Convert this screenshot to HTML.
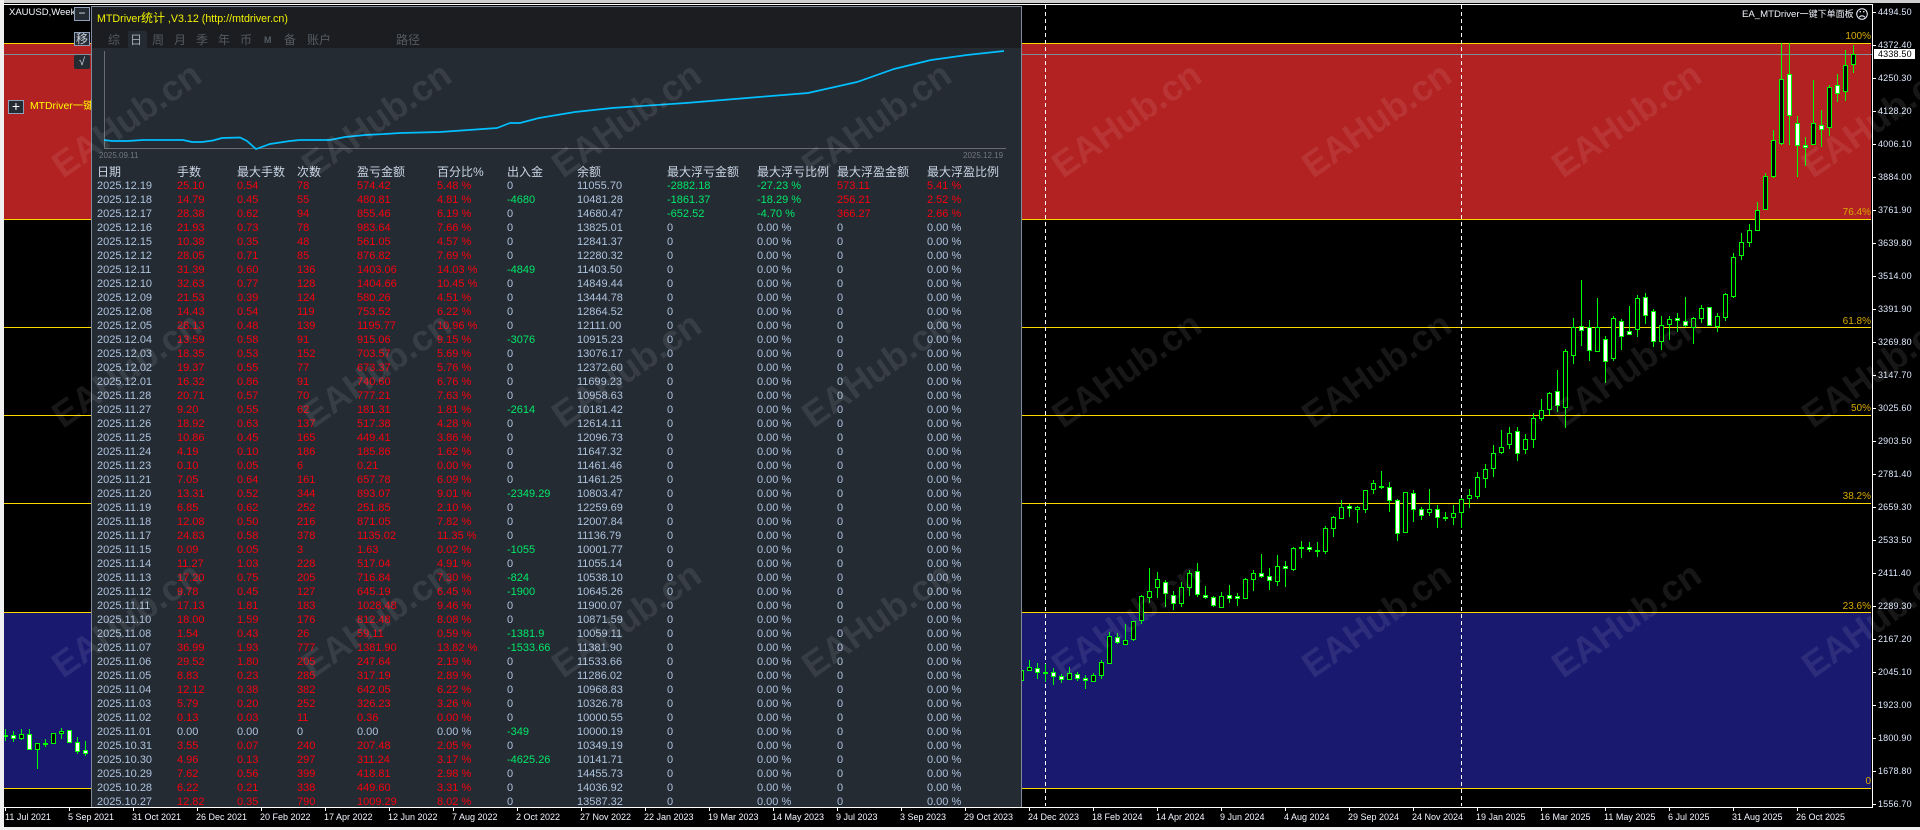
<!DOCTYPE html>
<html><head><meta charset="utf-8"><title>MTDriver</title>
<style>
html,body{margin:0;padding:0;background:#000;width:1920px;height:830px;overflow:hidden}
body{position:relative;font-family:"Liberation Sans","Noto Sans CJK SC",sans-serif;color:#fff}
.a{position:absolute}
.pr{position:absolute;left:1878px;font-size:9px;line-height:12px;color:#dfeaff;letter-spacing:.02em}
.dt{position:absolute;top:811px;font-size:9px;line-height:12px;color:#f2f6ff;white-space:nowrap}
.fb{position:absolute;right:49px;font-size:10px;line-height:12px;color:#d9ab00}
#panel{position:absolute;left:91px;top:6px;width:929px;height:801px;background:#252b33;border:1px solid #7f8a9a;border-bottom:0;overflow:hidden}
#head{position:absolute;left:0;top:0;width:100%;height:41px;background:#1b1d20}
.tab{position:absolute;top:25px;font-size:12px;line-height:16px;color:#555b62}
#tbl{position:absolute;left:5px;top:158px;width:920px;height:643px;overflow:hidden;font-size:11px;color:#aec3de}
#tbl p{margin:0;display:grid;grid-template-columns:80px 60px 60px 60px 80px 70px 70px 90px 90px 80px 90px 80px;height:14px;line-height:14px;white-space:nowrap}
#tbl p.h{font-size:12px;color:#c8d4e4}
#tbl b{font-weight:normal;color:#f60010}
#tbl i{font-style:normal;color:#00e868}
.btn{position:absolute;box-sizing:border-box;background:#252b33;border:1px solid #8fa1ba;color:#dfe6f0;font-size:12px;line-height:12px;text-align:center;overflow:hidden}
</style></head><body>

<div class="a" style="left:4px;top:43px;width:1867px;height:176px;background:#b22222"></div>
<div class="a" style="left:4px;top:612px;width:1867px;height:176px;background:#191970"></div>

<svg class="a" style="left:0;top:0" width="1920" height="830" shape-rendering="crispEdges">
<path fill="none" stroke="#ffd700" stroke-width="1" d="M4 43.5H1871M4 219.5H1871M4 327.5H1871M4 415.5H1871M4 503.5H1871M4 612.5H1871M4 788.5H1871"/>
<path fill="none" stroke="#7f8d9b" stroke-width="1" d="M4 54.5H1872"/>
<path fill="none" stroke="#fff" stroke-width="1" stroke-dasharray="4 3" d="M1045.5 5V806M1461.5 5V806"/>
<path fill="none" stroke="#00ff00" stroke-width="1" d="M5.5 729V741M13.5 731V742M21.5 729V740M29.5 729V749M37.5 743V769M45.5 739V747M53.5 733V744M61.5 728V739M69.5 730V743M77.5 737V754M85.5 741V756M1021.5 668V682M1029.5 660V671M1037.5 663V679M1045.5 664V682M1053.5 668V685M1061.5 674V683M1069.5 667V680M1077.5 672V681M1085.5 675V689M1093.5 673V682M1101.5 660V679M1109.5 632V663M1117.5 633V644M1125.5 624V645M1133.5 621V641M1141.5 595V624M1149.5 568V603M1157.5 572V598M1165.5 580V607M1173.5 591V610M1181.5 582V607M1189.5 570V596M1197.5 563V597M1205.5 586V599M1213.5 596V607M1221.5 592V607M1229.5 585V603M1237.5 593V606M1245.5 578V598M1253.5 570V591M1261.5 554V578M1269.5 568V590M1277.5 555V586M1285.5 561V587M1293.5 547V571M1301.5 541V558M1309.5 542V552M1317.5 542V557M1325.5 526V554M1333.5 516V537M1341.5 500V519M1349.5 504V517M1357.5 506V523M1365.5 490V513M1373.5 480V494M1381.5 471V489M1389.5 482V512M1397.5 499V541M1405.5 492V532M1413.5 490V522M1421.5 507V520M1429.5 489V516M1437.5 505V528M1445.5 512V521M1453.5 505V525M1461.5 498V528M1469.5 489V508M1477.5 472V499M1485.5 464V488M1493.5 445V477M1501.5 430V454M1509.5 427V449M1517.5 427V461M1525.5 434V454M1533.5 413V448M1541.5 399V421M1549.5 392V415M1557.5 370V412M1565.5 349V428M1573.5 318V364M1581.5 280V346M1589.5 320V361M1597.5 298V352M1605.5 336V383M1613.5 316V361M1621.5 319V350M1629.5 306V334M1637.5 295V337M1645.5 293V324M1653.5 309V347M1661.5 316V350M1669.5 316V340M1677.5 313V332M1685.5 297V327M1693.5 317V344M1701.5 305V323M1709.5 307V326M1717.5 313V332M1725.5 293V321M1733.5 253V298M1741.5 233V260M1749.5 224V247M1757.5 202V231M1765.5 173V210M1773.5 130V178M1781.5 43V145M1789.5 43V145M1797.5 116V177M1805.5 137V166M1813.5 80V145M1821.5 110V147M1829.5 85V136M1837.5 74V102M1845.5 50V101M1853.5 45V73"/>
<path fill="#000" stroke="#00ff00" stroke-width="1" d="M3.5 735.5h4v1h-4zM19.5 734.5h4v4h-4zM35.5 743.5h4v6h-4zM51.5 733.5h4v10h-4zM59.5 731.5h4v2h-4zM1019.5 670.5h4v10h-4zM1027.5 667.5h4v3h-4zM1067.5 673.5h4v6h-4zM1091.5 675.5h4v6h-4zM1099.5 662.5h4v13h-4zM1107.5 636.5h4v27h-4zM1123.5 640.5h4v4h-4zM1131.5 621.5h4v18h-4zM1139.5 596.5h4v24h-4zM1147.5 591.5h4v6h-4zM1155.5 579.5h4v8h-4zM1179.5 587.5h4v16h-4zM1187.5 573.5h4v14h-4zM1219.5 596.5h4v11h-4zM1243.5 579.5h4v19h-4zM1251.5 573.5h4v6h-4zM1275.5 566.5h4v15h-4zM1291.5 548.5h4v21h-4zM1315.5 550.5h4v1h-4zM1323.5 528.5h4v23h-4zM1331.5 517.5h4v11h-4zM1339.5 507.5h4v11h-4zM1355.5 507.5h4v2h-4zM1363.5 490.5h4v19h-4zM1371.5 483.5h4v6h-4zM1403.5 492.5h4v40h-4zM1427.5 509.5h4v3h-4zM1443.5 517.5h4v1h-4zM1451.5 513.5h4v4h-4zM1459.5 499.5h4v13h-4zM1467.5 495.5h4v3h-4zM1475.5 477.5h4v19h-4zM1483.5 469.5h4v9h-4zM1491.5 453.5h4v15h-4zM1499.5 447.5h4v5h-4zM1507.5 433.5h4v11h-4zM1523.5 439.5h4v10h-4zM1531.5 418.5h4v21h-4zM1539.5 410.5h4v8h-4zM1547.5 393.5h4v16h-4zM1563.5 351.5h4v56h-4zM1571.5 327.5h4v28h-4zM1595.5 327.5h4v24h-4zM1611.5 318.5h4v40h-4zM1635.5 298.5h4v31h-4zM1659.5 325.5h4v16h-4zM1667.5 319.5h4v5h-4zM1691.5 318.5h4v9h-4zM1699.5 308.5h4v10h-4zM1715.5 316.5h4v10h-4zM1723.5 294.5h4v23h-4zM1731.5 257.5h4v39h-4zM1739.5 242.5h4v13h-4zM1747.5 230.5h4v12h-4zM1755.5 210.5h4v20h-4zM1763.5 176.5h4v33h-4zM1771.5 140.5h4v36h-4zM1779.5 79.5h4v64h-4zM1811.5 123.5h4v21h-4zM1827.5 87.5h4v40h-4zM1843.5 65.5h4v26h-4zM1851.5 54.5h4v10h-4z"/>
<path fill="#fff" stroke="#00ff00" stroke-width="1" d="M11.5 735.5h4v3h-4zM27.5 734.5h4v15h-4zM43.5 743.5h4v1h-4zM67.5 730.5h4v12h-4zM75.5 742.5h4v9h-4zM83.5 750.5h4v3h-4zM1035.5 668.5h4v4h-4zM1043.5 672.5h4v1h-4zM1051.5 672.5h4v4h-4zM1059.5 676.5h4v3h-4zM1075.5 674.5h4v4h-4zM1083.5 678.5h4v2h-4zM1115.5 637.5h4v5h-4zM1163.5 582.5h4v11h-4zM1171.5 595.5h4v8h-4zM1195.5 571.5h4v23h-4zM1203.5 595.5h4v2h-4zM1211.5 597.5h4v8h-4zM1227.5 595.5h4v3h-4zM1235.5 596.5h4v2h-4zM1259.5 573.5h4v3h-4zM1267.5 576.5h4v4h-4zM1283.5 566.5h4v2h-4zM1299.5 547.5h4v1h-4zM1307.5 547.5h4v2h-4zM1347.5 506.5h4v2h-4zM1379.5 486.5h4v1h-4zM1387.5 487.5h4v13h-4zM1395.5 500.5h4v33h-4zM1411.5 493.5h4v16h-4zM1419.5 509.5h4v6h-4zM1435.5 509.5h4v8h-4zM1515.5 431.5h4v22h-4zM1555.5 391.5h4v14h-4zM1579.5 326.5h4v4h-4zM1587.5 327.5h4v23h-4zM1603.5 339.5h4v22h-4zM1619.5 321.5h4v15h-4zM1627.5 331.5h4v3h-4zM1643.5 297.5h4v18h-4zM1651.5 311.5h4v30h-4zM1675.5 318.5h4v2h-4zM1683.5 321.5h4v4h-4zM1707.5 307.5h4v18h-4zM1787.5 74.5h4v41h-4zM1795.5 123.5h4v22h-4zM1803.5 145.5h4v2h-4zM1819.5 125.5h4v4h-4zM1835.5 85.5h4v8h-4z"/>
</svg>

<div class="a" style="left:9px;top:6px;width:65px;height:13px;overflow:hidden;font-size:9.5px;line-height:13px;white-space:nowrap;color:#f4f8ff">XAUUSD,Weekly</div>
<div class="btn" style="left:74px;top:7px;width:16px;height:14px;line-height:11px">−</div>
<div class="btn" style="left:74px;top:32px;width:16px;height:14px;line-height:12px;color:#c8d2de">移</div>
<div class="btn" style="left:74px;top:55px;width:16px;height:14px;border:0;font-size:11px;line-height:14px;border-radius:2px;color:#c8d4e4">√</div>
<div class="btn" style="left:8px;top:100px;width:16px;height:14px;line-height:11px;font-size:14px;color:#fff">+</div>
<div class="a" style="left:30px;top:100px;width:61px;height:14px;overflow:hidden;font-size:10.4px;line-height:14px;white-space:nowrap;color:#ff0">MTDriver一键下单面板</div>

<div class="a" style="left:1742px;top:7px;font-size:9.6px;line-height:14px;white-space:nowrap;color:#f2f6ff">EA_MTDriver<span style="font-size:9px">一键下单面板</span></div>
<svg class="a" style="left:1855px;top:7px" width="14" height="14" fill="none" stroke="#eef3ff" stroke-width="1"><circle cx="7" cy="7" r="5.3"/><path d="M4 10.2Q7 7.4 10 10.2"/><path d="M4.6 4.7h1.3M8.1 4.7h1.3" stroke-width="1.4"/></svg>

<div class="fb" style="top:31px">100%</div>
<div class="fb" style="top:207px">76.4%</div>
<div class="fb" style="top:316px">61.8%</div>
<div class="fb" style="top:403px">50%</div>
<div class="fb" style="top:491px">38.2%</div>
<div class="fb" style="top:601px">23.6%</div>
<div class="fb" style="top:776px">0</div>

<div id="panel">
<div id="head"></div>
<div class="a" style="left:5px;top:3px;font-size:10.7px;line-height:16px;white-space:nowrap;color:#f2f200">MTDriver<span style="font-size:12px">统计</span> ,V3.12 (http://mtdriver.cn)</div>
<div class="a" style="left:36px;top:24px;width:19px;height:17px;background:#252b33;border-radius:2px"></div>
<div class="tab" style="left:16px">综</div>
<div class="tab" style="left:38px;color:#a3abb5">日</div>
<div class="tab" style="left:60px">周</div>
<div class="tab" style="left:82px">月</div>
<div class="tab" style="left:104px">季</div>
<div class="tab" style="left:126px">年</div>
<div class="tab" style="left:148px">币</div>
<div class="tab" style="left:172px;font-size:9px;font-weight:bold">M</div>
<div class="tab" style="left:192px">备</div>
<div class="tab" style="left:215px">账户</div>
<div class="tab" style="left:304px">路径</div>
<svg class="a" style="left:-92px;top:-7px" width="1022" height="165">
<path fill="none" stroke="#666c72" stroke-width="1" shape-rendering="crispEdges" d="M104.5 51V148.5H1006"/>
<polyline fill="none" stroke="#00bfff" stroke-width="1.7" points="104,140 112,141 128,141 143,140 183,140 192,142 202,142 213,140.5 222,138 240,137.5 247,141 256,149 270,144 290,141 300,140 330,140 345,137 365,135 385,134 400,133 440,132 497,128 510,123 520,123 539,118 575,112 612,108 686,103 759,97 808,93 857,82 894,69 931,60 967,55 1004,51"/>
</svg>
<div class="a" style="left:7px;top:143px;font-size:8px;line-height:12px;color:#727880">2025.09.11</div>
<div class="a" style="left:871px;top:143px;font-size:8px;line-height:12px;color:#727880">2025.12.19</div>
<div id="tbl">
<p class="h"><span>日期</span><span>手数</span><span>最大手数</span><span>次数</span><span>盈亏金额</span><span>百分比%</span><span>出入金</span><span>余额</span><span>最大浮亏金额</span><span>最大浮亏比例</span><span>最大浮盈金额</span><span>最大浮盈比例</span></p>
<p><span>2025.12.19</span><b>25.10</b><b>0.54</b><b>78</b><b>574.42</b><b>5.48 %</b><span>0</span><span>11055.70</span><i>-2882.18</i><i>-27.23 %</i><b>573.11</b><b>5.41 %</b></p>
<p><span>2025.12.18</span><b>14.79</b><b>0.45</b><b>55</b><b>480.81</b><b>4.81 %</b><i>-4680</i><span>10481.28</span><i>-1861.37</i><i>-18.29 %</i><b>256.21</b><b>2.52 %</b></p>
<p><span>2025.12.17</span><b>28.38</b><b>0.62</b><b>94</b><b>855.46</b><b>6.19 %</b><span>0</span><span>14680.47</span><i>-652.52</i><i>-4.70 %</i><b>366.27</b><b>2.66 %</b></p>
<p><span>2025.12.16</span><b>21.93</b><b>0.73</b><b>78</b><b>983.64</b><b>7.66 %</b><span>0</span><span>13825.01</span><span>0</span><span>0.00 %</span><span>0</span><span>0.00 %</span></p>
<p><span>2025.12.15</span><b>10.38</b><b>0.35</b><b>48</b><b>561.05</b><b>4.57 %</b><span>0</span><span>12841.37</span><span>0</span><span>0.00 %</span><span>0</span><span>0.00 %</span></p>
<p><span>2025.12.12</span><b>28.05</b><b>0.71</b><b>85</b><b>876.82</b><b>7.69 %</b><span>0</span><span>12280.32</span><span>0</span><span>0.00 %</span><span>0</span><span>0.00 %</span></p>
<p><span>2025.12.11</span><b>31.39</b><b>0.60</b><b>136</b><b>1403.06</b><b>14.03 %</b><i>-4849</i><span>11403.50</span><span>0</span><span>0.00 %</span><span>0</span><span>0.00 %</span></p>
<p><span>2025.12.10</span><b>32.63</b><b>0.77</b><b>128</b><b>1404.66</b><b>10.45 %</b><span>0</span><span>14849.44</span><span>0</span><span>0.00 %</span><span>0</span><span>0.00 %</span></p>
<p><span>2025.12.09</span><b>21.53</b><b>0.39</b><b>124</b><b>580.26</b><b>4.51 %</b><span>0</span><span>13444.78</span><span>0</span><span>0.00 %</span><span>0</span><span>0.00 %</span></p>
<p><span>2025.12.08</span><b>14.43</b><b>0.54</b><b>119</b><b>753.52</b><b>6.22 %</b><span>0</span><span>12864.52</span><span>0</span><span>0.00 %</span><span>0</span><span>0.00 %</span></p>
<p><span>2025.12.05</span><b>28.13</b><b>0.48</b><b>139</b><b>1195.77</b><b>10.96 %</b><span>0</span><span>12111.00</span><span>0</span><span>0.00 %</span><span>0</span><span>0.00 %</span></p>
<p><span>2025.12.04</span><b>13.59</b><b>0.58</b><b>91</b><b>915.06</b><b>9.15 %</b><i>-3076</i><span>10915.23</span><span>0</span><span>0.00 %</span><span>0</span><span>0.00 %</span></p>
<p><span>2025.12.03</span><b>18.35</b><b>0.53</b><b>152</b><b>703.57</b><b>5.69 %</b><span>0</span><span>13076.17</span><span>0</span><span>0.00 %</span><span>0</span><span>0.00 %</span></p>
<p><span>2025.12.02</span><b>19.37</b><b>0.55</b><b>77</b><b>673.37</b><b>5.76 %</b><span>0</span><span>12372.60</span><span>0</span><span>0.00 %</span><span>0</span><span>0.00 %</span></p>
<p><span>2025.12.01</span><b>16.32</b><b>0.86</b><b>91</b><b>740.60</b><b>6.76 %</b><span>0</span><span>11699.23</span><span>0</span><span>0.00 %</span><span>0</span><span>0.00 %</span></p>
<p><span>2025.11.28</span><b>20.71</b><b>0.57</b><b>70</b><b>777.21</b><b>7.63 %</b><span>0</span><span>10958.63</span><span>0</span><span>0.00 %</span><span>0</span><span>0.00 %</span></p>
<p><span>2025.11.27</span><b>9.20</b><b>0.55</b><b>62</b><b>181.31</b><b>1.81 %</b><i>-2614</i><span>10181.42</span><span>0</span><span>0.00 %</span><span>0</span><span>0.00 %</span></p>
<p><span>2025.11.26</span><b>18.92</b><b>0.63</b><b>137</b><b>517.38</b><b>4.28 %</b><span>0</span><span>12614.11</span><span>0</span><span>0.00 %</span><span>0</span><span>0.00 %</span></p>
<p><span>2025.11.25</span><b>10.86</b><b>0.45</b><b>165</b><b>449.41</b><b>3.86 %</b><span>0</span><span>12096.73</span><span>0</span><span>0.00 %</span><span>0</span><span>0.00 %</span></p>
<p><span>2025.11.24</span><b>4.19</b><b>0.10</b><b>186</b><b>185.86</b><b>1.62 %</b><span>0</span><span>11647.32</span><span>0</span><span>0.00 %</span><span>0</span><span>0.00 %</span></p>
<p><span>2025.11.23</span><b>0.10</b><b>0.05</b><b>6</b><b>0.21</b><b>0.00 %</b><span>0</span><span>11461.46</span><span>0</span><span>0.00 %</span><span>0</span><span>0.00 %</span></p>
<p><span>2025.11.21</span><b>7.05</b><b>0.64</b><b>161</b><b>657.78</b><b>6.09 %</b><span>0</span><span>11461.25</span><span>0</span><span>0.00 %</span><span>0</span><span>0.00 %</span></p>
<p><span>2025.11.20</span><b>13.31</b><b>0.52</b><b>344</b><b>893.07</b><b>9.01 %</b><i>-2349.29</i><span>10803.47</span><span>0</span><span>0.00 %</span><span>0</span><span>0.00 %</span></p>
<p><span>2025.11.19</span><b>6.85</b><b>0.62</b><b>252</b><b>251.85</b><b>2.10 %</b><span>0</span><span>12259.69</span><span>0</span><span>0.00 %</span><span>0</span><span>0.00 %</span></p>
<p><span>2025.11.18</span><b>12.08</b><b>0.50</b><b>216</b><b>871.05</b><b>7.82 %</b><span>0</span><span>12007.84</span><span>0</span><span>0.00 %</span><span>0</span><span>0.00 %</span></p>
<p><span>2025.11.17</span><b>24.83</b><b>0.58</b><b>378</b><b>1135.02</b><b>11.35 %</b><span>0</span><span>11136.79</span><span>0</span><span>0.00 %</span><span>0</span><span>0.00 %</span></p>
<p><span>2025.11.15</span><b>0.09</b><b>0.05</b><b>3</b><b>1.63</b><b>0.02 %</b><i>-1055</i><span>10001.77</span><span>0</span><span>0.00 %</span><span>0</span><span>0.00 %</span></p>
<p><span>2025.11.14</span><b>11.27</b><b>1.03</b><b>228</b><b>517.04</b><b>4.91 %</b><span>0</span><span>11055.14</span><span>0</span><span>0.00 %</span><span>0</span><span>0.00 %</span></p>
<p><span>2025.11.13</span><b>17.20</b><b>0.75</b><b>205</b><b>716.84</b><b>7.30 %</b><i>-824</i><span>10538.10</span><span>0</span><span>0.00 %</span><span>0</span><span>0.00 %</span></p>
<p><span>2025.11.12</span><b>9.78</b><b>0.45</b><b>127</b><b>645.19</b><b>6.45 %</b><i>-1900</i><span>10645.26</span><span>0</span><span>0.00 %</span><span>0</span><span>0.00 %</span></p>
<p><span>2025.11.11</span><b>17.13</b><b>1.81</b><b>183</b><b>1028.48</b><b>9.46 %</b><span>0</span><span>11900.07</span><span>0</span><span>0.00 %</span><span>0</span><span>0.00 %</span></p>
<p><span>2025.11.10</span><b>18.00</b><b>1.59</b><b>176</b><b>812.48</b><b>8.08 %</b><span>0</span><span>10871.59</span><span>0</span><span>0.00 %</span><span>0</span><span>0.00 %</span></p>
<p><span>2025.11.08</span><b>1.54</b><b>0.43</b><b>26</b><b>59.11</b><b>0.59 %</b><i>-1381.9</i><span>10059.11</span><span>0</span><span>0.00 %</span><span>0</span><span>0.00 %</span></p>
<p><span>2025.11.07</span><b>36.99</b><b>1.93</b><b>777</b><b>1381.90</b><b>13.82 %</b><i>-1533.66</i><span>11381.90</span><span>0</span><span>0.00 %</span><span>0</span><span>0.00 %</span></p>
<p><span>2025.11.06</span><b>29.52</b><b>1.80</b><b>205</b><b>247.64</b><b>2.19 %</b><span>0</span><span>11533.66</span><span>0</span><span>0.00 %</span><span>0</span><span>0.00 %</span></p>
<p><span>2025.11.05</span><b>8.83</b><b>0.23</b><b>285</b><b>317.19</b><b>2.89 %</b><span>0</span><span>11286.02</span><span>0</span><span>0.00 %</span><span>0</span><span>0.00 %</span></p>
<p><span>2025.11.04</span><b>12.12</b><b>0.38</b><b>382</b><b>642.05</b><b>6.22 %</b><span>0</span><span>10968.83</span><span>0</span><span>0.00 %</span><span>0</span><span>0.00 %</span></p>
<p><span>2025.11.03</span><b>5.79</b><b>0.20</b><b>252</b><b>326.23</b><b>3.26 %</b><span>0</span><span>10326.78</span><span>0</span><span>0.00 %</span><span>0</span><span>0.00 %</span></p>
<p><span>2025.11.02</span><b>0.13</b><b>0.03</b><b>11</b><b>0.36</b><b>0.00 %</b><span>0</span><span>10000.55</span><span>0</span><span>0.00 %</span><span>0</span><span>0.00 %</span></p>
<p><span>2025.11.01</span><span>0.00</span><span>0.00</span><span>0</span><span>0.00</span><span>0.00 %</span><i>-349</i><span>10000.19</span><span>0</span><span>0.00 %</span><span>0</span><span>0.00 %</span></p>
<p><span>2025.10.31</span><b>3.55</b><b>0.07</b><b>240</b><b>207.48</b><b>2.05 %</b><span>0</span><span>10349.19</span><span>0</span><span>0.00 %</span><span>0</span><span>0.00 %</span></p>
<p><span>2025.10.30</span><b>4.96</b><b>0.13</b><b>297</b><b>311.24</b><b>3.17 %</b><i>-4625.26</i><span>10141.71</span><span>0</span><span>0.00 %</span><span>0</span><span>0.00 %</span></p>
<p><span>2025.10.29</span><b>7.62</b><b>0.56</b><b>399</b><b>418.81</b><b>2.98 %</b><span>0</span><span>14455.73</span><span>0</span><span>0.00 %</span><span>0</span><span>0.00 %</span></p>
<p><span>2025.10.28</span><b>6.22</b><b>0.21</b><b>338</b><b>449.60</b><b>3.31 %</b><span>0</span><span>14036.92</span><span>0</span><span>0.00 %</span><span>0</span><span>0.00 %</span></p>
<p><span>2025.10.27</span><b>12.82</b><b>0.35</b><b>790</b><b>1009.29</b><b>8.02 %</b><span>0</span><span>13587.32</span><span>0</span><span>0.00 %</span><span>0</span><span>0.00 %</span></p>
</div>
</div>

<div class="a" style="left:4px;top:807px;width:1916px;height:20px;background:#000"></div>
<svg class="a" style="left:0;top:0" width="1920" height="830" shape-rendering="crispEdges">
<path fill="none" stroke="#fff" stroke-width="1" d="M4 4.5H1872.5V807.5H4M5.5 808V811M69.5 808V811M133.5 808V811M197.5 808V811M261.5 808V811M325.5 808V811M389.5 808V811M453.5 808V811M517.5 808V811M581.5 808V811M645.5 808V811M709.5 808V811M773.5 808V811M837.5 808V811M901.5 808V811M965.5 808V811M1029.5 808V811M1093.5 808V811M1157.5 808V811M1221.5 808V811M1285.5 808V811M1349.5 808V811M1413.5 808V811M1477.5 808V811M1541.5 808V811M1605.5 808V811M1669.5 808V811M1733.5 808V811M1797.5 808V811M1873 12.5h3M1873 45.5h3M1873 78.5h3M1873 111.5h3M1873 144.5h3M1873 177.5h3M1873 210.5h3M1873 243.5h3M1873 276.5h3M1873 309.5h3M1873 342.5h3M1873 375.5h3M1873 408.5h3M1873 441.5h3M1873 474.5h3M1873 507.5h3M1873 540.5h3M1873 573.5h3M1873 606.5h3M1873 639.5h3M1873 672.5h3M1873 705.5h3M1873 738.5h3M1873 771.5h3M1873 804.5h3"/>
</svg>

<div class="pr" style="top:6px">4494.50</div>
<div class="pr" style="top:39px">4372.40</div>
<div class="pr" style="top:72px">4250.30</div>
<div class="pr" style="top:105px">4128.20</div>
<div class="pr" style="top:138px">4006.10</div>
<div class="pr" style="top:171px">3884.00</div>
<div class="pr" style="top:204px">3761.90</div>
<div class="pr" style="top:237px">3639.80</div>
<div class="pr" style="top:270px">3514.00</div>
<div class="pr" style="top:303px">3391.90</div>
<div class="pr" style="top:336px">3269.80</div>
<div class="pr" style="top:369px">3147.70</div>
<div class="pr" style="top:402px">3025.60</div>
<div class="pr" style="top:435px">2903.50</div>
<div class="pr" style="top:468px">2781.40</div>
<div class="pr" style="top:501px">2659.30</div>
<div class="pr" style="top:534px">2533.50</div>
<div class="pr" style="top:567px">2411.40</div>
<div class="pr" style="top:600px">2289.30</div>
<div class="pr" style="top:633px">2167.20</div>
<div class="pr" style="top:666px">2045.10</div>
<div class="pr" style="top:699px">1923.00</div>
<div class="pr" style="top:732px">1800.90</div>
<div class="pr" style="top:765px">1678.80</div>
<div class="pr" style="top:798px">1556.70</div>
<div class="a" style="left:1874px;top:49px;width:41px;height:10px;background:#fff;color:#000;font-size:9px;line-height:10px;padding-left:4px;box-sizing:border-box;letter-spacing:.02em">4338.50</div>

<div class="dt" style="left:5px">11 Jul 2021</div>
<div class="dt" style="left:68px">5 Sep 2021</div>
<div class="dt" style="left:132px">31 Oct 2021</div>
<div class="dt" style="left:196px">26 Dec 2021</div>
<div class="dt" style="left:260px">20 Feb 2022</div>
<div class="dt" style="left:324px">17 Apr 2022</div>
<div class="dt" style="left:388px">12 Jun 2022</div>
<div class="dt" style="left:452px">7 Aug 2022</div>
<div class="dt" style="left:516px">2 Oct 2022</div>
<div class="dt" style="left:580px">27 Nov 2022</div>
<div class="dt" style="left:644px">22 Jan 2023</div>
<div class="dt" style="left:708px">19 Mar 2023</div>
<div class="dt" style="left:772px">14 May 2023</div>
<div class="dt" style="left:836px">9 Jul 2023</div>
<div class="dt" style="left:900px">3 Sep 2023</div>
<div class="dt" style="left:964px">29 Oct 2023</div>
<div class="dt" style="left:1028px">24 Dec 2023</div>
<div class="dt" style="left:1092px">18 Feb 2024</div>
<div class="dt" style="left:1156px">14 Apr 2024</div>
<div class="dt" style="left:1220px">9 Jun 2024</div>
<div class="dt" style="left:1284px">4 Aug 2024</div>
<div class="dt" style="left:1348px">29 Sep 2024</div>
<div class="dt" style="left:1412px">24 Nov 2024</div>
<div class="dt" style="left:1476px">19 Jan 2025</div>
<div class="dt" style="left:1540px">16 Mar 2025</div>
<div class="dt" style="left:1604px">11 May 2025</div>
<div class="dt" style="left:1668px">6 Jul 2025</div>
<div class="dt" style="left:1732px">31 Aug 2025</div>
<div class="dt" style="left:1796px">26 Oct 2025</div>

<div class="a" style="left:0;top:0;width:1920px;height:3px;background:#cdcdcd"></div>
<div class="a" style="left:0;top:0;width:4px;height:830px;background:#f0f0f0"></div>
<div class="a" style="left:0;top:827px;width:1920px;height:3px;background:#f0f0f0"></div>

<svg class="a" style="left:0;top:0" width="1920" height="830" font-family="Liberation Sans" font-weight="bold" font-size="36" fill="#fff" fill-opacity=".09">
<text transform="translate(63 179) rotate(-35)">EAHub.cn</text>
<text transform="translate(313 179) rotate(-35)">EAHub.cn</text>
<text transform="translate(563 179) rotate(-35)">EAHub.cn</text>
<text transform="translate(813 179) rotate(-35)">EAHub.cn</text>
<text transform="translate(1063 179) rotate(-35)">EAHub.cn</text>
<text transform="translate(1313 179) rotate(-35)">EAHub.cn</text>
<text transform="translate(1563 179) rotate(-35)">EAHub.cn</text>
<text transform="translate(1813 179) rotate(-35)">EAHub.cn</text>
<text transform="translate(63 429) rotate(-35)">EAHub.cn</text>
<text transform="translate(313 429) rotate(-35)">EAHub.cn</text>
<text transform="translate(563 429) rotate(-35)">EAHub.cn</text>
<text transform="translate(813 429) rotate(-35)">EAHub.cn</text>
<text transform="translate(1063 429) rotate(-35)">EAHub.cn</text>
<text transform="translate(1313 429) rotate(-35)">EAHub.cn</text>
<text transform="translate(1563 429) rotate(-35)">EAHub.cn</text>
<text transform="translate(1813 429) rotate(-35)">EAHub.cn</text>
<text transform="translate(63 679) rotate(-35)">EAHub.cn</text>
<text transform="translate(313 679) rotate(-35)">EAHub.cn</text>
<text transform="translate(563 679) rotate(-35)">EAHub.cn</text>
<text transform="translate(813 679) rotate(-35)">EAHub.cn</text>
<text transform="translate(1063 679) rotate(-35)">EAHub.cn</text>
<text transform="translate(1313 679) rotate(-35)">EAHub.cn</text>
<text transform="translate(1563 679) rotate(-35)">EAHub.cn</text>
<text transform="translate(1813 679) rotate(-35)">EAHub.cn</text>
</svg>
</body></html>
